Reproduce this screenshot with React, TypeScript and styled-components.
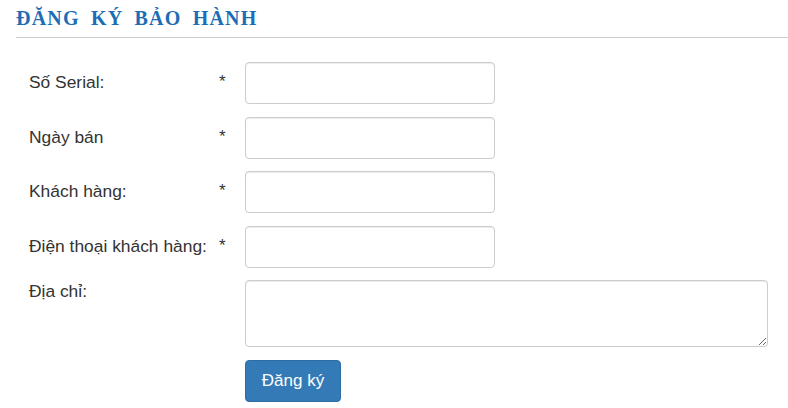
import React from "react";
import styled, { createGlobalStyle } from "styled-components";

const GlobalStyle = createGlobalStyle`
  body {
    margin: 0;
    background: #fff;
    font-family: "Liberation Sans", Arial, sans-serif;
    color: #333;
  }
`;

const Page = styled.div`
  padding-left: 16px;
  padding-top: 6px;
`;

const Title = styled.h2`
  margin: 0;
  padding-bottom: 7px;
  border-bottom: 1px solid #cfcfcf;
  font-family: "Liberation Serif", "Times New Roman", serif;
  font-weight: bold;
  font-size: 20px;
  line-height: 24px;
  letter-spacing: 1.2px;
  word-spacing: 5px;
  color: #1d6db5;
`;

const Form = styled.form`
  padding: 24px 0 0 13px;
  display: grid;
  grid-template-columns: 190px 26px 1fr;
  row-gap: 12.5px;
`;

const Label = styled.label<{ $top?: boolean }>`
  font-size: 17.4px;
  line-height: 22px;
  padding-top: ${p => (p.$top ? "0" : "9px")};
  color: #333;
  white-space: nowrap;
`;

const Star = styled.span`
  font-size: 17px;
  line-height: 22px;
  padding-top: 9px;
  color: #333;
`;

const Input = styled.input`
  box-sizing: border-box;
  width: 250px;
  height: 42px;
  border: 1px solid #ccc;
  border-radius: 4px;
  box-shadow: inset 0 1px 1px rgba(0, 0, 0, 0.075);
  padding: 6px 12px;
  font-size: 16px;
  font-family: inherit;
`;

const TextArea = styled.textarea`
  box-sizing: border-box;
  display: block;
  width: 523px;
  height: 67px;
  border: 1px solid #ccc;
  border-radius: 4px;
  box-shadow: inset 0 1px 1px rgba(0, 0, 0, 0.075);
  padding: 6px 12px;
  font-size: 16px;
  font-family: inherit;
`;

const Button = styled.button`
  grid-column: 3;
  width: 96px;
  height: 42px;
  margin-top: 0.5px;
  background: #337ab7;
  border: 1px solid #2e6da4;
  border-radius: 4px;
  color: #fff;
  font-family: "Liberation Sans", Arial, sans-serif;
  font-size: 17px;
  cursor: pointer;
`;

const fields = [
  { label: "Số Serial:", required: true },
  { label: "Ngày bán", required: true },
  { label: "Khách hàng:", required: true },
  { label: "Điện thoại khách hàng:", required: true },
];

export default function App() {
  return (
    <Page>
      <GlobalStyle />
      <Title>ĐĂNG KÝ BẢO HÀNH</Title>
      <Form onSubmit={e => e.preventDefault()}>
        {fields.map(f => (
          <React.Fragment key={f.label}>
            <Label>{f.label}</Label>
            <Star>{f.required ? "*" : ""}</Star>
            <div>
              <Input type="text" />
            </div>
          </React.Fragment>
        ))}
        <Label $top>Địa chỉ:</Label>
        <Star />
        <TextArea />
        <Button type="submit">Đăng ký</Button>
      </Form>
    </Page>
  );
}
